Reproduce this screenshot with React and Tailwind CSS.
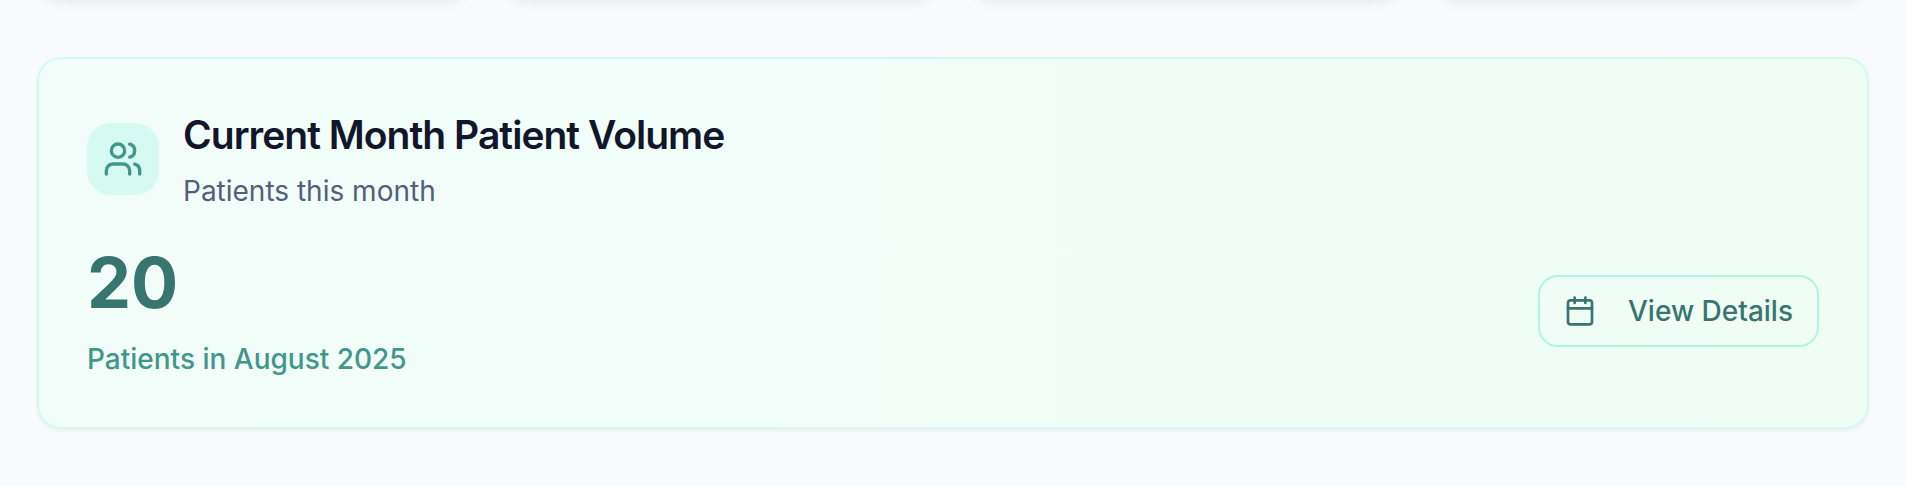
import { Calendar, Users } from "lucide-react";

const stats = ["one", "two", "three", "four"];

export default function App() {
  return (
    <main className="flow-root min-h-screen bg-slate-50 px-[37px] pb-14 font-['Inter',sans-serif]">
      <div className="-mt-[67px] grid grid-cols-4 gap-8" aria-hidden="true">
        {stats.map((id) => (
          <div
            key={id}
            className="h-16 rounded-3xl bg-white shadow-[0_8px_12px_-2px_rgba(0,0,0,0.06),0_4px_8px_-4px_rgba(0,0,0,0.05)]"
          />
        ))}
      </div>
      <section className="mt-15 rounded-3xl border-2 border-[#d3faf0] bg-linear-to-r from-[#f2fdfa] to-[#effdf5] p-12 shadow-[0_2px_4px_rgba(0,0,0,0.05)]">
        <div className="flex items-center gap-6">
          <div className="flex size-18 items-center justify-center rounded-3xl bg-[#d5faf1] text-[#42978a]">
            <Users className="size-10" />
          </div>
          <div>
            <h2 className="text-[39px] leading-14 font-semibold tracking-tight text-[#12162b]">Current Month Patient Volume</h2>
            <p className="mt-2 text-[28px] leading-10 text-[#526079]">Patients this month</p>
          </div>
        </div>
        <div className="mt-8 flex items-center justify-between">
          <div>
            <p className="text-[70px] leading-20 font-bold text-[#37756e]">20</p>
            <p className="mt-4 text-[28px] leading-10 font-medium text-[#42978a]">Patients in August 2025</p>
          </div>
          <button type="button" className="flex h-18 items-center gap-8 rounded-[20px] border-2 border-[#aef5e4] px-6 text-[28px] font-medium text-[#37756e]">
            <Calendar className="size-8" />
            View Details
          </button>
        </div>
      </section>
    </main>
  );
}
